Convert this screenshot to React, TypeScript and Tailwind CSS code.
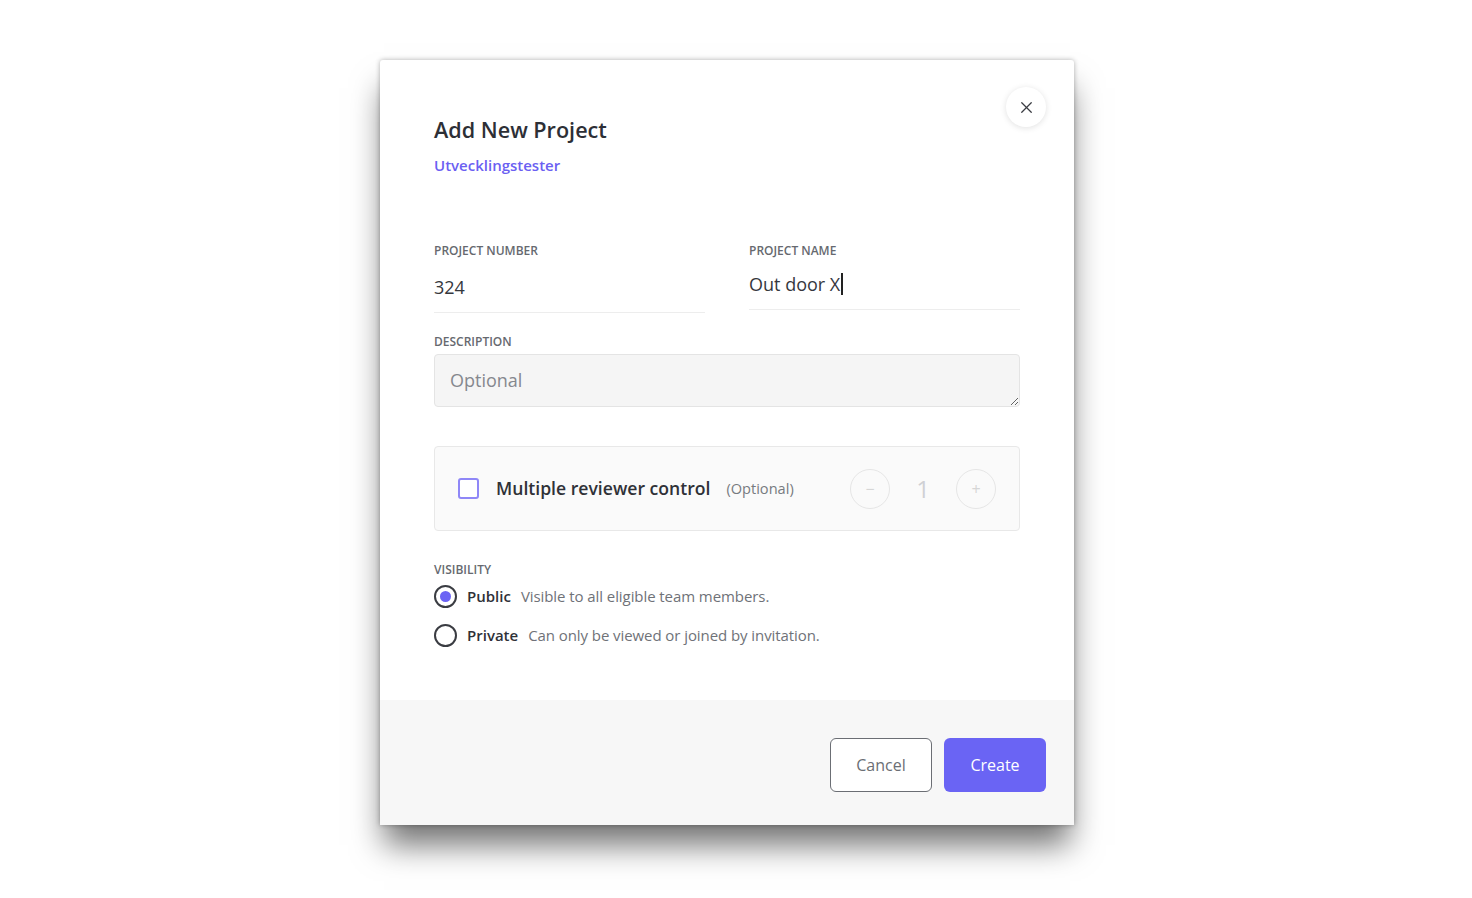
import { X } from 'lucide-react';

const font = { fontFamily: '"Open Sans", "Noto Sans", sans-serif' };

const Label = ({ children }: { children: string }) => (
  <p className="text-[12px] font-semibold uppercase leading-4 text-[#66696f]">{children}</p>
);

const Radio = ({ checked, title, text }: { checked?: boolean; title: string; text: string }) => (
  <div className="flex items-center">
    <span className="flex h-[23px] w-[23px] items-center justify-center rounded-full border-2 border-[#3a3c42]">
      {checked && <span className="h-[11px] w-[11px] rounded-full bg-[#6b63f4]" />}
    </span>
    <span className="ml-[10px] text-[15px] font-semibold text-[#2f3137]">{title}</span>
    <span className="ml-[10px] text-[15px] tracking-[-0.005em] text-[#6f7278]">{text}</span>
  </div>
);

export default function App() {
  return (
    <div className="min-h-[898px] bg-white pt-[60px]" style={font}>
      <div className="relative ml-[380px] w-[694px] overflow-hidden rounded-t-[3px] bg-white shadow-[0_24px_30px_-4px_rgba(0,0,0,0.55),0_0_5px_rgba(0,0,0,0.3)]">
        <button className="absolute right-[28px] top-[27px] flex h-[40px] w-[40px] items-center justify-center rounded-full bg-white shadow-[0_1px_6px_rgba(0,0,0,0.12)]">
          <X size={19} strokeWidth={1.6} className="text-[#3a3c42]" />
        </button>

        <div className="h-[640px] px-[54px] pt-[55px]">
          <h1 className="text-[21.6px] font-semibold leading-[30px] text-[#2d2f36]">Add New Project</h1>
          <p className="mt-[9px] text-[15px] font-semibold leading-[22px] text-[#6b5ff2]">Utvecklingstester</p>

          <div className="mt-[67px] grid grid-cols-[271px_270px] justify-between">
            <div>
              <Label>Project number</Label>
              <div className="mt-[8px] h-[46px] border-b border-[#ededed] pt-[7px] text-[18px] leading-[26px] text-[#35373d]">324</div>
            </div>
            <div className="-ml-[1px]">
              <Label>Project name</Label>
              <div className="mt-[8px] flex h-[43px] items-start border-b border-[#ededed] pt-[4px] text-[18px] leading-[26px] text-[#35373d]">
                Out door X<span className="ml-[1px] mt-[2px] h-[22px] w-[1.5px] bg-[#222]" />
              </div>
            </div>
          </div>

          <div className="mt-[21px]">
            <Label>Description</Label>
            <textarea
              placeholder="Optional"
              className="mt-[4px] block h-[53px] w-full rounded-[4px] border border-[#e4e4e4] bg-[#f5f5f5] px-[15px] py-[12px] text-[18px] leading-[26px] text-[#35373d] placeholder:text-[#85888e] focus:outline-none"
            />
          </div>

          <div className="mt-[39px] flex h-[85px] items-center rounded-[4px] border border-[#e8e8e8] bg-[#fafafa] pl-[23px] pr-[23px]">
            <span className="h-[21px] w-[21px] rounded-[3px] border-2 border-[#8f87f7] bg-white" />
            <span className="ml-[17px] text-[17.6px] font-semibold text-[#2f3137]">Multiple reviewer control</span>
            <span className="ml-[16px] text-[14.6px] text-[#777a80]">(Optional)</span>
            <div className="ml-auto flex items-center">
              <span className="flex h-[40px] w-[40px] items-center justify-center rounded-full border border-[#e6e6e6] text-[16px] text-[#d6d6d6]">−</span>
              <span className="w-[66px] text-center text-[24px] text-[#cfd0d4]">1</span>
              <span className="flex h-[40px] w-[40px] items-center justify-center rounded-full border border-[#e6e6e6] text-[16px] text-[#d6d6d6]">+</span>
            </div>
          </div>

          <div className="mt-[31px]">
            <Label>Visibility</Label>
            <div className="mt-[7px] flex flex-col gap-[16px]">
              <Radio checked title="Public" text="Visible to all eligible team members." />
              <Radio title="Private" text="Can only be viewed or joined by invitation." />
            </div>
          </div>
        </div>

        <div className="flex h-[125px] justify-end gap-[12px] bg-[#f7f7f7] pr-[28px] pt-[38px]">
          <button className="h-[54px] w-[102px] rounded-[6px] border border-[#6b6e74] bg-white text-[16px] text-[#6b6e74]">Cancel</button>
          <button className="h-[54px] w-[102px] rounded-[6px] bg-[#6a64f4] text-[16px] text-white">Create</button>
        </div>
      </div>
    </div>
  );
}
